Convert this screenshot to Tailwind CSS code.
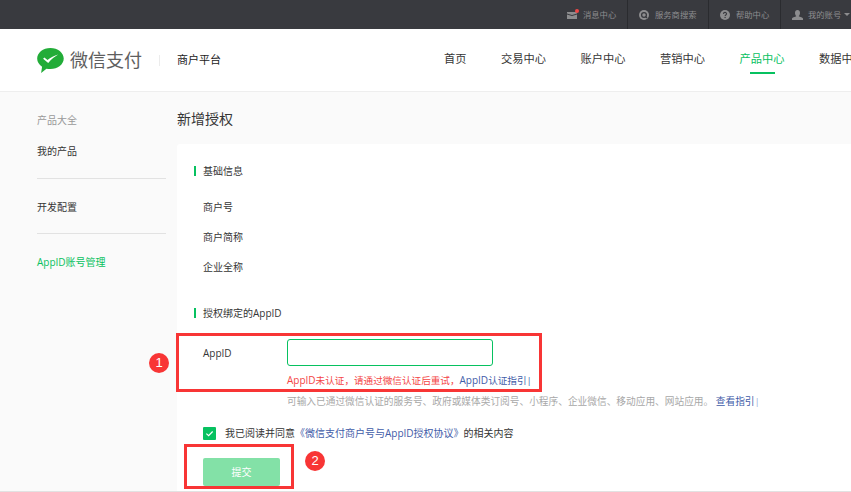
<!DOCTYPE html>
<html lang="zh">
<head>
<meta charset="utf-8">
<script src="https://cdn.jsdelivr.net/npm/@tailwindcss/browser@4"></script>
</head>
<body class="m-0">
<div class="relative flex h-[492px] w-[851px] flex-col overflow-hidden bg-[#fafafa] font-['Open_Sans','Noto_Sans_CJK_SC',sans-serif] text-[10px] text-[#353535]">
  <!-- top bar -->
  <div class="flex h-[29px] shrink-0 justify-start bg-[#393a3f] pl-[567px] text-[8.3px] leading-[29px] text-[#8d8d8f]">
    <div class="flex w-[61px] items-center border-r border-[#2a2b2f]">
      <span class="relative mr-[6px] h-[8px] w-[10px]">
        <svg viewBox="0 0 10 8" class="block h-[8px] w-[10px]"><path d="M0 1h10v1.6L5 4 0 2.6zM0 3.6 5 5l5-1.4V8H0z" fill="#8d8d8f"/></svg>
        <span class="absolute right-[-2px] top-[-2px] h-[4px] w-[4px] rounded-full bg-[#f04848]"></span>
      </span>
      <span>消息中心</span>
    </div>
    <div class="flex w-[81px] items-center border-r border-[#2a2b2f] pl-[11px]">
      <svg viewBox="0 0 10 10" class="mr-[6px] h-[10px] w-[10px]"><circle cx="5" cy="5" r="5" fill="#8d8d8f"/><circle cx="5" cy="5" r="2.4" fill="none" stroke="#393a3f" stroke-width="1.3"/><path d="M6.5 6.5 8 8" stroke="#393a3f" stroke-width="1.2"/></svg>
      <span>服务商搜索</span>
    </div>
    <div class="flex w-[72px] items-center border-r border-[#2a2b2f] pl-[11px]">
      <svg viewBox="0 0 10 10" class="mr-[6px] h-[10px] w-[10px]"><circle cx="5" cy="5" r="5" fill="#8d8d8f"/><path d="M3.4 3.9C3.5 2.9 4.2 2.4 5 2.4c.9 0 1.6.6 1.6 1.4 0 1.2-1.5 1.2-1.5 2.3" fill="none" stroke="#393a3f" stroke-width="1.1"/><rect x="4.5" y="6.9" width="1.2" height="1.2" fill="#393a3f"/></svg>
      <span>帮助中心</span>
    </div>
    <div class="flex items-center pl-[11px]">
      <svg viewBox="0 0 11 10" class="mr-[5px] h-[10px] w-[11px]"><path d="M5.5 0c1.6 0 2.5 1.2 2.5 2.9C8 4.4 7.2 5.6 6.7 6c0 .6 3.6 1.2 4.3 2.4V10H0V8.400C.7 7.200 4.300 6.600 4.300 6 3.800 5.600 3 4.400 3 2.900 3 1.200 3.900 0 5.500 0z" fill="#8d8d8f"/></svg>
      <span class="whitespace-nowrap">我的账号</span>
      <span class="ml-[3px] h-0 w-0 border-x-[3px] border-t-[3px] border-x-transparent border-t-[#8d8d8f]"></span>
    </div>
  </div>

  <!-- header -->
  <div class="flex h-[63px] shrink-0 items-center border-b border-[#eeeeee] bg-white pl-[37px]">
    <svg viewBox="0.8 1 25.6 24" class="h-[25px] w-[27px] shrink-0">
      <path d="M13.500 1C6.400 1 .8 5.500.8 11.100c0 3.200 1.800 6 4.700 7.900l-.9 6 5.100-4.200c1.200.3 2.500.4 3.800.4 7.100 0 12.800-4.500 12.800-10.100S20.600 1 13.500 1z" fill="#22ac38"/>
      <path d="M6.500 11.200l1.200-1 3 2.200c3-2.300 6.500-4 10.300-5.200-3.400 1.900-6.500 4.600-9.600 8.100z" fill="#fff"/>
    </svg>
    <span class="ml-[6px] w-[74px] shrink-0 text-[18px] leading-[24px] text-[#5e5e5e]">微信支付</span>
    <span class="ml-[15px] h-[11px] w-px shrink-0 bg-[#ececec]"></span>
    <span class="ml-[17px] w-[50px] shrink-0 text-[11px] text-[#222222]">商户平台</span>
    <nav class="mb-[2px] ml-[217px] flex shrink-0 gap-[34.500px] whitespace-nowrap text-[11.250px] leading-[16px] text-[#353535]">
      <span>首页</span>
      <span>交易中心</span>
      <span>账户中心</span>
      <span>营销中心</span>
      <span class="relative text-[#07c160]">产品中心<span class="absolute bottom-[-7px] left-[10px] h-[2px] w-[25px] bg-[#07c160]"></span></span>
      <span>数据中心</span>
    </nav>
  </div>

  <!-- body -->
  <div class="flex min-h-0 flex-1">
    <aside class="w-[177px] shrink-0 pl-[37px] pt-[21px]">
      <p class="h-[14px] leading-[14px] text-[#999999]">产品大全</p>
      <p class="mt-[17px] h-[14px] leading-[14px]">我的产品</p>
      <div class="mt-[20px] h-px w-[129px] bg-[#e2e2e2]"></div>
      <p class="mt-[21px] h-[14px] leading-[14px]">开发配置</p>
      <div class="mt-[19px] h-px w-[129px] bg-[#e2e2e2]"></div>
      <p class="mt-[21px] h-[14px] leading-[14px] text-[#07c160]">AppID账号管理</p>
    </aside>
    <main class="min-w-0 flex-1">
      <h1 class="mt-[17px] h-[20px] text-[14px] font-normal leading-[20px] text-[#353535]">新增授权</h1>
      <div class="mt-[15px] h-[347px] rounded-tl-[3px] bg-white pl-[17px] pt-[20px]">
        <div class="flex h-[14px] items-center">
          <span class="h-[10px] w-[2px] bg-[#07c160]"></span>
          <span class="ml-[7px] leading-[14px]">基础信息</span>
        </div>
        <div class="pl-[9px] leading-[14px]">
          <p class="mt-[22px] h-[14px]">商户号</p>
          <p class="mt-[16px] h-[14px]">商户简称</p>
          <p class="mt-[16px] h-[14px]">企业全称</p>
        </div>
        <div class="mt-[32px] flex h-[14px] items-center">
          <span class="h-[10px] w-[2px] bg-[#07c160]"></span>
          <span class="ml-[7px] leading-[14px]">授权绑定的AppID</span>
        </div>
        <div class="mt-[19px] flex pl-[9px]">
          <label class="w-[84px] pt-[7px] leading-[14px]">AppID</label>
          <div class="whitespace-nowrap">
            <div class="h-[27px] w-[206px] rounded-[3px] border border-[#07c160] bg-white"></div>
            <p class="mt-[7px] h-[14px] text-[9.600px] leading-[14px] text-[#f44545]"><span class="text-[10px]">AppID</span>未认证，请通过微信认证后重试，<span class="text-[10px] text-[#3f5ca8]">AppID</span><span class="text-[#3f5ca8]">认证指引|</span></p>
            <p class="mt-[8px] h-[14px] text-[9.700px] leading-[14px] text-[#a8a8a8]">可输入已通过微信认证的服务号、政府或媒体类订阅号、小程序、企业微信、移动应用、网站应用。 <span class="text-[#3f5ca8]">查看指引</span><span class="text-[#9ab0dc]">|</span></p>
          </div>
        </div>
        <div class="mt-[17px] flex items-center pl-[9px]">
          <span class="flex h-[13px] w-[13px] items-center justify-center rounded-[1px] bg-[#07c160]">
            <svg viewBox="0 0 10 10" class="h-[9px] w-[9px]"><path d="M1.500 5.200 4 7.500 8.500 2.800" fill="none" stroke="#fff" stroke-width="1.300"/></svg>
          </span>
          <span class="ml-[9px] whitespace-nowrap">我已阅读并同意<span class="text-[#3f5ca8]">《微信支付商户号与AppID授权协议》</span>的相关内容</span>
        </div>
        <button class="ml-[9px] mt-[17px] block h-[28px] w-[77px] rounded-[2px] bg-[#83e1a7] text-[10px] text-white">提交</button>
      </div>
    </main>
  </div>
  <div class="h-px shrink-0 bg-[#e2e2e2]"></div>

  <!-- annotations -->
  <div class="absolute left-[176px] top-[333px] h-[59px] w-[366px] border-[3px] border-[#f83535]"></div>
  <div class="absolute left-[184px] top-[444px] h-[45px] w-[110px] border-[3px] border-[#f83535]"></div>
  <div class="absolute left-[149px] top-[353px] flex h-[20px] w-[20px] items-center justify-center rounded-full bg-[#f83535] font-['Liberation_Sans'] text-[13px] text-white">1</div>
  <div class="absolute left-[305px] top-[451px] flex h-[20px] w-[20px] items-center justify-center rounded-full bg-[#f83535] font-['Liberation_Sans'] text-[13px] text-white">2</div>
</div>
</body>
</html>
